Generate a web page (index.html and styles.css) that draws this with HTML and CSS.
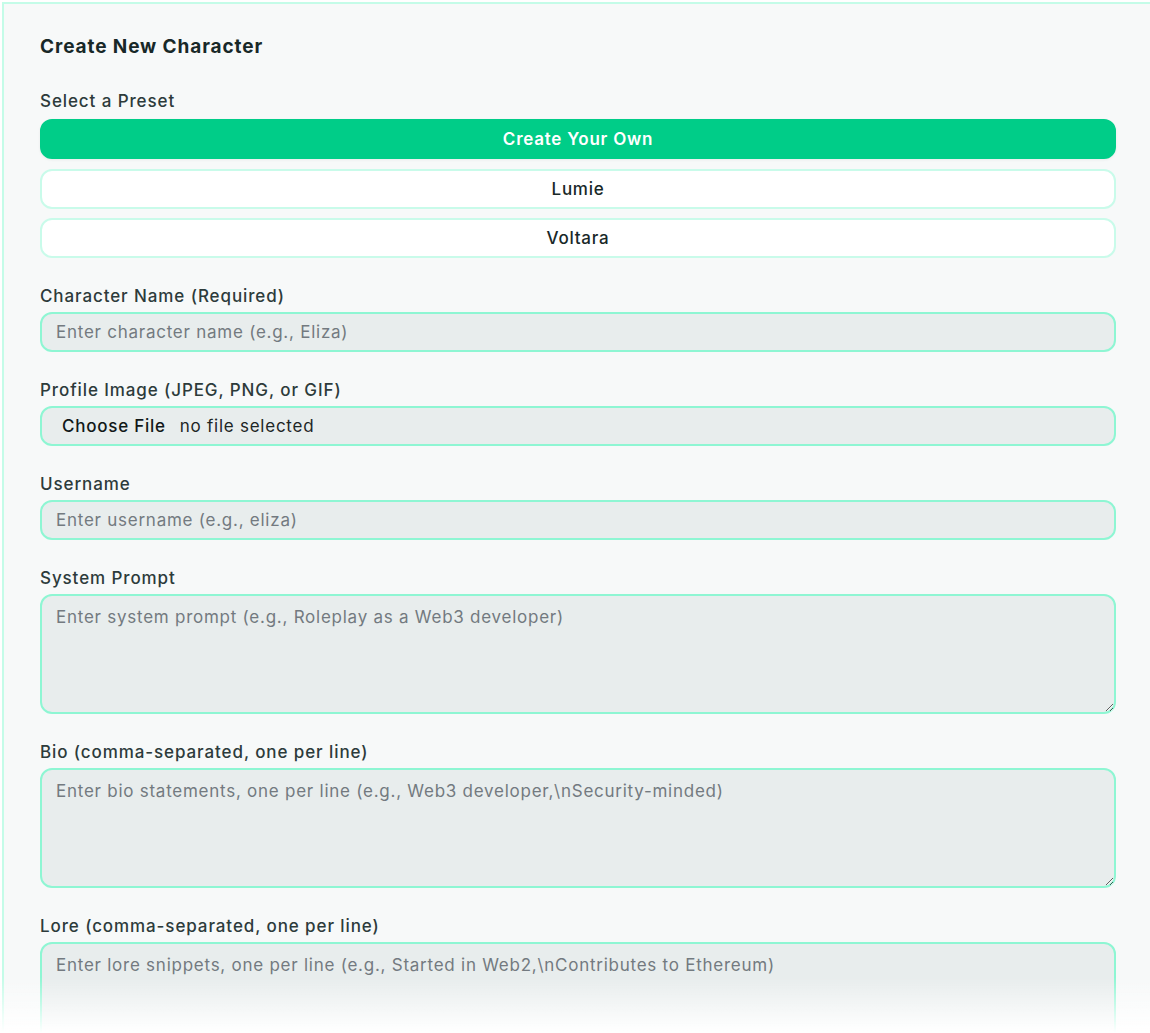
FILE: index.html
```html
<!DOCTYPE html>
<html lang="en">
<head>
<meta charset="utf-8">
<title>Create New Character</title>
<link rel="stylesheet" href="styles.css">
</head>
<body>
<div class="panel">
  <h2 class="title">Create New Character</h2>

  <div class="group">
    <label class="label label-preset">Select a Preset</label>
    <div class="presets">
      <button class="preset preset-active" type="button">Create Your Own</button>
      <button class="preset" type="button">Lumie</button>
      <button class="preset" type="button">Voltara</button>
    </div>
  </div>

  <div class="group">
    <label class="label" for="name">Character Name (Required)</label>
    <input class="field" id="name" type="text" placeholder="Enter character name (e.g., Eliza)">
  </div>

  <div class="group">
    <label class="label">Profile Image (JPEG, PNG, or GIF)</label>
    <div class="field file-field">
      <span class="file-btn">Choose File</span>
      <span class="file-name">no file selected</span>
    </div>
  </div>

  <div class="group">
    <label class="label" for="username">Username</label>
    <input class="field" id="username" type="text" placeholder="Enter username (e.g., eliza)">
  </div>

  <div class="group">
    <label class="label" for="prompt">System Prompt</label>
    <textarea class="field area" id="prompt" placeholder="Enter system prompt (e.g., Roleplay as a Web3 developer)"></textarea>
  </div>

  <div class="group">
    <label class="label" for="bio">Bio (comma-separated, one per line)</label>
    <textarea class="field area" id="bio" placeholder="Enter bio statements, one per line (e.g., Web3 developer,\nSecurity-minded)"></textarea>
  </div>

  <div class="group">
    <label class="label" for="lore">Lore (comma-separated, one per line)</label>
    <textarea class="field area" id="lore" placeholder="Enter lore snippets, one per line (e.g., Started in Web2,\nContributes to Ethereum)"></textarea>
  </div>
</div>
<div class="fade"></div>
</body>
</html>
```

FILE: styles.css
```css
html, body {
  margin: 0;
  padding: 0;
  overflow: hidden;
  background: #ffffff;
}

body {
  font-family: Inter, "Noto Sans", "Liberation Sans", sans-serif;
  font-size: 17px;
  letter-spacing: 0.75px;
  color: #2a3838;
  width: 1160px;
}

.panel {
  margin: 2px;
  width: 1076px;
  padding: 29px 36px 40px;
  border: 2px solid #c4fce8;
  background: #f7f9f9;
}

.title {
  margin: 0 0 28px;
  font-size: 19px;
  line-height: 28px;
  font-weight: 700;
  letter-spacing: 0.9px;
  color: #182828;
}

.group {
  display: flex;
  flex-direction: column;
  margin-bottom: 26px;
}

.label {
  font-size: 17px;
  line-height: 24px;
  font-weight: 500;
  letter-spacing: 0.9px;
  color: #2d3b3b;
  margin-bottom: 4px;
}

.label-preset {
  margin-bottom: 6px;
}

.presets {
  display: flex;
  flex-direction: column;
  gap: 9.5px;
}

.preset {
  height: 40px;
  border-radius: 12px;
  border: 2px solid #c9fbea;
  background: #ffffff;
  font-family: inherit;
  font-size: 17px;
  letter-spacing: 0.75px;
  font-weight: 500;
  color: #182828;
  cursor: pointer;
}

.preset-active {
  background: #00cd88;
  border-color: #00cd88;
  color: #ffffff;
  font-weight: 600;
  box-shadow: 0 1px 3px rgba(0, 0, 0, 0.06);
}

.field {
  box-sizing: border-box;
  width: 100%;
  height: 40px;
  margin: 0;
  padding: 0 14px;
  border: 2px solid #8ef6d3;
  border-radius: 12px;
  background: #e8eded;
  font-family: inherit;
  font-size: 17px;
  letter-spacing: 0.75px;
  color: #1e2a2a;
  outline: none;
}

.field::placeholder {
  color: #737a80;
}

.file-field {
  display: flex;
  align-items: center;
  padding-left: 20px;
}

.file-btn {
  font-weight: 500;
  color: #111818;
  margin-right: 14px;
}

.file-name {
  color: #1e2626;
}

.area {
  display: block;
  height: 120px;
  padding: 9px 14px;
  line-height: 24px;
  resize: vertical;
}

.fade {
  position: fixed;
  left: 0;
  right: 0;
  bottom: 0;
  height: 56px;
  background: linear-gradient(to bottom, rgba(255, 255, 255, 0), rgba(255, 255, 255, 1));
  pointer-events: none;
}
```
